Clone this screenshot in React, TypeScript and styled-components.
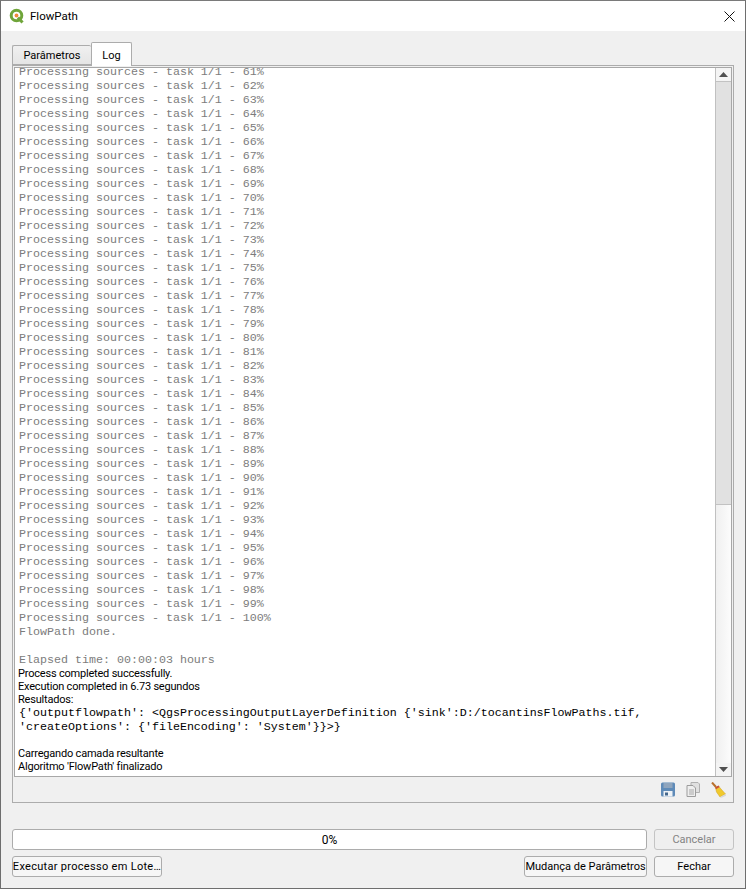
import React from "react";
import styled, { createGlobalStyle } from "styled-components";

const Global = createGlobalStyle`
  html, body { margin: 0; padding: 0; background: #f0f0f0; }
  #root { width: 746px; height: 889px; }
`;

const Window = styled.div`
  box-sizing: border-box; width: 746px; height: 889px;
  border: 1px solid #6e6e6e; border-top-color: #7a7a7a;
  background: #f0f0f0; display: flex; flex-direction: column;
  font-family: Roboto, "Noto Sans", sans-serif; font-size: 11px; color: #000;
  overflow: hidden;
`;
const TitleBar = styled.div`
  height: 30px; flex: none; background: #fff; display: flex; align-items: center;
  padding: 0 10px 0 8px; gap: 5px; font-size: 11.5px;
`;
const TitleText = styled.span`flex: 1;`;
const Body = styled.div`
  flex: 1; display: flex; flex-direction: column; padding: 11px 11px 10px 11px; min-height: 0;
`;
const TabBar = styled.div`
  display: flex; align-items: flex-end; height: 23px; flex: none;
  position: relative; z-index: 1;
`;
const Tab = styled.div<{ $active?: boolean }>`
  box-sizing: border-box; display: flex; align-items: center; justify-content: center;
  width: ${p => (p.$active ? 41 : 79)}px; height: ${p => (p.$active ? 24 : 20)}px;
  border: 1px solid #acacac; border-bottom: ${p => (p.$active ? "none" : "1px solid #acacac")};
  border-right: ${p => (p.$active ? "1px solid #acacac" : "none")};
  border-radius: 2px 2px 0 0;
  background: ${p => (p.$active ? "#fff" : "linear-gradient(#f0f0f0, #e5e5e5)")};
  margin-bottom: ${p => (p.$active ? "-1px" : "0")};
  padding-top: ${p => (p.$active ? 2 : 1)}px;
`;
const Pane = styled.div`
  box-sizing: border-box; height: 738px; flex: none; width: 722px;
  border: 1px solid #acacac; background: #f0f0f0; padding: 1px 1px 0 1px; display: flex; flex-direction: column;
`;
const LogBox = styled.div`
  box-sizing: border-box; height: 710px; flex: none;
  border: 1px solid #a8a8a8; background: #fff; display: flex; min-height: 0;
`;
const LogText = styled.div`
  flex: 1; overflow: hidden; position: relative; padding-left: 4px; display: flex; flex-direction: column; justify-content: flex-end;
  padding-bottom: 3px; white-space: pre;
`;
const Mono = styled.div<{ $dim?: boolean }>`
  font-family: "Liberation Mono", monospace; font-size: 11.67px; height: 14px; line-height: 14px;
  color: ${p => (p.$dim ? "#7c7c7c" : "#000")};
  flex: none;
`;
const Plain = styled.div`
  height: 13px; line-height: 13px; font-size: 11px; letter-spacing: -0.2px; flex: none; margin-left: -1px;
`;
const Gap = styled.div<{ $h: number }>`height: ${p => p.$h}px; flex: none;`;
const ScrollBar = styled.div`
  width: 15px; flex: none; display: flex; flex-direction: column; background: linear-gradient(90deg, #f0f0f0, #fcfcfc);
  border-left: 1px solid #c0c0c0;
`;
const ScrollButton = styled.div`
  height: 13px; flex: none; display: flex; align-items: center; justify-content: center;
  background: #f4f4f4;
`;
const Thumb = styled.div`
  height: 422px; flex: none; background: #e1e1e1; border-top: 1px solid #c2c2c2; border-bottom: 1px solid #c2c2c2;
`;
const Track = styled.div`flex: 1;`;
const PaneTools = styled.div`
  flex: 1; display: flex; align-items: center; justify-content: flex-end; gap: 11px; padding-right: 5px; background: #f0f0f0;
`;
const ProgressRow = styled.div`
  display: flex; gap: 7px; margin-top: 26px; flex: none;
`;
const Progress = styled.div`
  box-sizing: border-box; flex: 1; height: 21px; background: #fff; border: 1px solid #acacac; border-radius: 3px;
  display: flex; align-items: center; justify-content: center; font-size: 12px;
`;
const Button = styled.div<{ $w: number; $off?: boolean; $spread?: number }>`
  box-sizing: border-box; width: ${p => p.$w}px; height: 21px; flex: none;
  display: flex; align-items: center; justify-content: center; white-space: nowrap;
  border: 1px solid ${p => (p.$off ? "#c4c4c4" : "#acacac")}; border-radius: 3px;
  background: ${p => (p.$off ? "#efefef" : "#f6f6f6")}; color: ${p => (p.$off ? "#838383" : "#000")};
  letter-spacing: ${p => p.$spread ?? 0}px;
`;
const ButtonRow = styled.div`
  display: flex; margin-top: 6px; flex: none; align-items: center; gap: 7px;
`;
const Spacer = styled.div`flex: 1;`;

const QgisIcon = () => (
  <svg width="16" height="16" viewBox="0 0 16 16">
    <circle cx="7.5" cy="7.5" r="5.3" fill="none" stroke="#6fa53a" strokeWidth="3" />
    <path d="M9 9.5 L13.5 14.5" stroke="#6fa53a" strokeWidth="3" />
    <circle cx="7.5" cy="7.5" r="1.9" fill="#ee8a3a" />
  </svg>
);
const CloseIcon = () => (
  <svg width="11" height="11" viewBox="0 0 11 11">
    <path d="M0.5 0.5 L10.5 10.5 M10.5 0.5 L0.5 10.5" stroke="#111" strokeWidth="1" />
  </svg>
);
const Up = () => <svg width="9" height="5" viewBox="0 0 9 5"><path d="M4.5 0 L9 5 H0 Z" fill="#505050" /></svg>;
const Down = () => <svg width="9" height="5" viewBox="0 0 9 5"><path d="M0 0 H9 L4.5 5 Z" fill="#505050" /></svg>;
const SaveIcon = () => (
  <svg width="14" height="15" viewBox="0 0 14 15">
    <rect x="0" y="0.5" width="14" height="14" rx="1.5" fill="#5f8bb8" />
    <rect x="2.5" y="1" width="9" height="5" fill="#8fa5bd" />
    <rect x="2.5" y="9" width="9" height="5.5" fill="#eef2f6" />
    <rect x="4" y="10.5" width="3" height="3" fill="#44678c" />
  </svg>
);
const CopyIcon = () => (
  <svg width="14" height="15" viewBox="0 0 14 15">
    <path d="M5 0.5 H12 L13.5 2 V10.5 H5 Z" fill="#e0e0e0" stroke="#b0b0b0" />
    <path d="M1 3.5 H7 L9.5 6 V14.5 H1 Z" fill="#eeeeee" stroke="#9c9c9c" />
    <path d="M3 8 H8 M3 10 H8 M3 12 H8" stroke="#a8a8a8" />
  </svg>
);
const BroomIcon = () => (
  <svg width="16" height="16" viewBox="0 0 16 16">
    <path d="M1 0.5 L5 5" stroke="#b8702c" strokeWidth="2" />
    <path d="M4.5 5.5 L7.5 4 L10 7 L14.5 12 L9 15 L5.5 10 Z" fill="#f0c92e" stroke="#d0a018" strokeWidth="0.5" />
    <path d="M4 5.5 L7.5 3.6 L8.6 5 L5 7.2 Z" fill="#c8503a" />
    <path d="M9 15 L14.5 12 L15 13.8 L10.5 15.8 Z" fill="#d8d8d8" />
  </svg>
);

const lines = Array.from({ length: 40 }, (_, i) => `Processing sources - task 1/1 - ${61 + i}%`);

export default function App() {
  return (
    <Window>
      <Global />
      <TitleBar>
        <QgisIcon />
        <TitleText>FlowPath</TitleText>
        <CloseIcon />
      </TitleBar>
      <Body>
        <TabBar>
          <Tab>Parâmetros</Tab>
          <Tab $active>Log</Tab>
        </TabBar>
        <Pane>
          <LogBox>
            <LogText>
              {lines.map(l => <Mono key={l} $dim>{l}</Mono>)}
              <Mono $dim>FlowPath done.</Mono>
              <Gap $h={14} />
              <Mono $dim>Elapsed time: 00:00:03 hours</Mono>
              <Plain>Process completed successfully.</Plain>
              <Plain>Execution completed in 6.73 segundos</Plain>
              <Plain>Resultados:</Plain>
              <Mono>{"{'outputflowpath': <QgsProcessingOutputLayerDefinition {'sink':D:/tocantinsFlowPaths.tif,"}</Mono>
              <Mono>{"'createOptions': {'fileEncoding': 'System'}}>}"}</Mono>
              <Gap $h={13} />
              <Plain>Carregando camada resultante</Plain>
              <Plain>Algoritmo 'FlowPath' finalizado</Plain>
            </LogText>
            <ScrollBar>
              <ScrollButton><Up /></ScrollButton>
              <Thumb />
              <Track />
              <ScrollButton><Down /></ScrollButton>
            </ScrollBar>
          </LogBox>
          <PaneTools>
            <SaveIcon />
            <CopyIcon />
            <BroomIcon />
          </PaneTools>
        </Pane>
        <ProgressRow>
          <Progress>0%</Progress>
          <Button $w={80} $off>Cancelar</Button>
        </ProgressRow>
        <ButtonRow>
          <Button $w={150} $spread={0.3}>Executar processo em Lote…</Button>
          <Spacer />
          <Button $w={123}>Mudança de Parâmetros</Button>
          <Button $w={80}>Fechar</Button>
        </ButtonRow>
      </Body>
    </Window>
  );
}
